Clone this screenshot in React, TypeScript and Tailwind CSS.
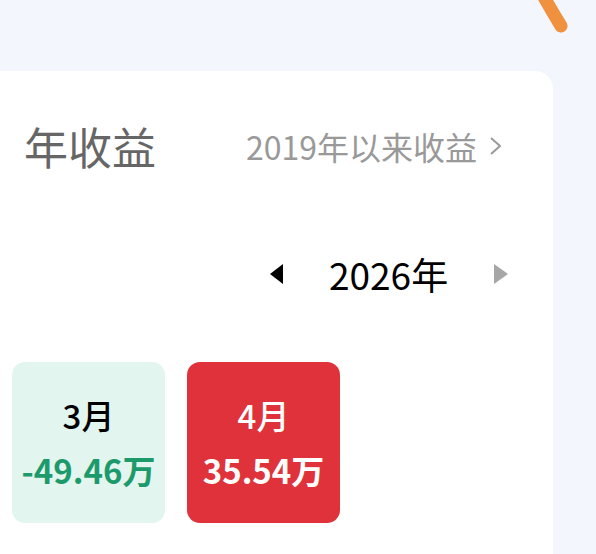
import React from 'react';

const font = "font-['Noto_Sans_CJK_SC','Noto_Sans',sans-serif]";

interface MonthItem {
  label: string;
  amount: string;
  up: boolean;
}

const months: MonthItem[] = [
  { label: '3月', amount: '-49.46万', up: false },
  { label: '4月', amount: '35.54万', up: true },
];

function MonthCard({ item }: { item: MonthItem }) {
  const box = item.up ? 'bg-[#e0323a]' : 'bg-[#e2f5ee]';
  const labelColor = item.up ? 'text-white' : 'text-black';
  const amountColor = item.up ? 'text-white' : 'text-[#1d9a6c]';
  return (
    <div className={`w-[153px] h-[161px] rounded-[13px] flex flex-col items-center justify-center gap-[15px] ${box}`}>
      <p className={`text-[33px] leading-[40px] font-medium ${labelColor}`}>{item.label}</p>
      <p className={`text-[33px] leading-[40px] font-bold ${amountColor}`}>{item.amount}</p>
    </div>
  );
}

export default function App() {
  return (
    <div className={`relative w-[596px] h-[554px] overflow-hidden bg-[#f3f6fc] pt-[71px] ${font}`}>
      {/* orange decoration peeking from the top */}
      <svg className="absolute left-[520px] top-[-10px]" width="60" height="50" viewBox="0 0 60 50">
        <path d="M20 0 Q30 18 41 36" stroke="#f0913f" strokeWidth="13" strokeLinecap="round" fill="none" />
      </svg>

      <div className="w-[553px] h-full bg-white rounded-tr-[18px] pt-[53px]">
        {/* header */}
        <div className="flex items-center justify-between pl-[24px] pr-[51px] h-[44px]">
          <h2 className="text-[44px] leading-[44px] text-[#666666]">年收益</h2>
          <div className="flex items-center gap-[12px] text-[32px] leading-[40px] text-[#999999]">
            <span>2019年以来收益</span>
            <svg width="13" height="20" viewBox="0 0 13 20">
              <path d="M2 2 L11 10 L2 18" stroke="#999999" strokeWidth="2" fill="none" strokeLinejoin="round" />
            </svg>
          </div>
        </div>

        {/* year switcher */}
        <div className="flex items-center mt-[86px] pl-[270px] h-[40px]">
          <svg width="13" height="20" viewBox="0 0 13 20">
            <path d="M13 0 L0 10 L13 20 Z" fill="#000000" />
          </svg>
          <span className="ml-[46px] text-[37px] leading-[40px] text-black">2026年</span>
          <svg className="ml-[46px]" width="14" height="20" viewBox="0 0 14 20">
            <path d="M0 0 L14 10 L0 20 Z" fill="#a6a6a6" />
          </svg>
        </div>

        {/* months */}
        <div className="flex gap-[22px] pl-[12px] mt-[68px]">
          {months.map((m) => (
            <MonthCard key={m.label} item={m} />
          ))}
        </div>
      </div>
    </div>
  );
}
